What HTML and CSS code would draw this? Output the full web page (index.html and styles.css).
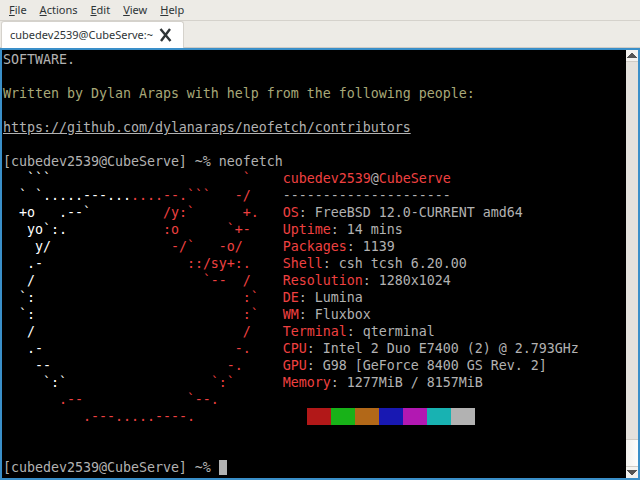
FILE: index.html
```html
<!DOCTYPE html>
<html lang="en">
<head>
<meta charset="utf-8">
<title>qterminal</title>
<link rel="stylesheet" href="styles.css">
</head>
<body>
<div class="app">
  <nav class="menubar">
    <span class="menu"><u>F</u>ile</span>
    <span class="menu"><u>A</u>ctions</span>
    <span class="menu"><u>E</u>dit</span>
    <span class="menu"><u>V</u>iew</span>
    <span class="menu"><u>H</u>elp</span>
  </nav>
  <div class="tabbar">
    <div class="tab">
      <span>cubedev2539@CubeServe:~</span>
      <svg class="close" width="13" height="14" viewBox="0 0 13 14"><path d="M1.5 1 L11.5 13 M11 1 L2 13" stroke="#2e3436" stroke-width="2.4" fill="none"/></svg>
    </div>
  </div>
  <div class="terminal">
    <pre class="screen">SOFTWARE.

<span class="y">Written by Dylan Araps with help from the following people:</span>

<span class="u">https://github.com/dylanaraps/neofetch/contributors</span>

[cubedev2539@CubeServe] ~% neofetch
<span class="w">   ```</span>                        <span class="r">`</span>    <span class="r">cubedev2539</span>@<span class="r">CubeServe</span>
<span class="w">  ` `.....---...</span><span class="r">....--.```   -/</span>    ---------------------
<span class="w">  +o   .--`</span>         <span class="r">/y:`      +.</span>   <span class="r">OS</span>: FreeBSD 12.0-CURRENT amd64
<span class="w">   yo`:.</span>            <span class="r">:o      `+-</span>    <span class="r">Uptime</span>: 14 mins
<span class="w">    y/</span>               <span class="r">-/`   -o/</span>     <span class="r">Packages</span>: 1139
<span class="w">   .-</span>                  <span class="r">::/sy+:.</span>    <span class="r">Shell</span>: csh tcsh 6.20.00
<span class="w">   /</span>                     <span class="r">`--  /</span>    <span class="r">Resolution</span>: 1280x1024
<span class="w">  `:</span>                          <span class="r">:`</span>   <span class="r">DE</span>: Lumina
<span class="w">  `:</span>                          <span class="r">:`</span>   <span class="r">WM</span>: Fluxbox
<span class="w">   /</span>                          <span class="r">/</span>    <span class="r">Terminal</span>: qterminal
<span class="w">   .-</span>                        <span class="r">-.</span>    <span class="r">CPU</span>: Intel 2 Duo E7400 (2) @ 2.793GHz
<span class="w">    --</span>                      <span class="r">-.</span>     <span class="r">GPU</span>: G98 [GeForce 8400 GS Rev. 2]
<span class="w">     `:`</span>                  <span class="r">`:`</span>      <span class="r">Memory</span>: 1277MiB / 8157MiB
       <span class="r">.--             `--.</span>
          <span class="r">.---.....----.</span>              <span class="blk"><i class="c1"></i><i class="c2"></i><i class="c3"></i><i class="c4"></i><i class="c5"></i><i class="c6"></i><i class="c7"></i></span>


[cubedev2539@CubeServe] ~% <span class="cursor"> </span></pre>
    <div class="scrollbar">
      <div class="arrow top"><svg width="10" height="5" viewBox="0 0 10 5"><path d="M4 0 H6 V1 H7 V2 H8 V3 H9 V4 H10 V5 H0 V4 H1 V3 H2 V2 H3 V1 H4 Z" fill="#555"/></svg></div>
      <div class="track"></div>
      <div class="thumb"></div>
      <div class="arrow"><svg width="10" height="5" viewBox="0 0 10 5"><path d="M0 0 H10 V1 H9 V2 H8 V3 H7 V4 H6 V5 H4 V4 H3 V3 H2 V2 H1 V1 H0 Z" fill="#555"/></svg></div>
    </div>
  </div>
</div>
</body>
</html>
```
FILE: styles.css
```css
html, body { margin: 0; padding: 0; }
body { width: 640px; height: 480px; overflow: hidden; background: #edebe6; }
.app { display: flex; flex-direction: column; height: 480px; }
.menubar {
  display: flex; gap: 13px; height: 21px; flex: none; padding: 0 0 2px 9px; align-items: center;
  border-bottom: 1px solid #d5d2cc; background: #edebe6;
  font: 11px "Noto Sans", sans-serif; color: #2e3436; box-sizing: border-box;
}
.tabbar {
  display: flex; align-items: flex-start; flex: none; height: 27px; padding-left: 1px;
  box-sizing: border-box; background: #edebe6; border-bottom: 1px solid #cfccc6;
}
.tab {
  display: flex; align-items: center; gap: 6px; width: 183px; height: 27px; flex: none; box-sizing: border-box;
  padding: 0 0 2px 8px; background: #fff; border: 1px solid #d5d2cc; border-bottom: 0; border-radius: 3px 3px 0 0;
  font: 11px "Noto Sans", sans-serif; color: #2e3436;
}
.close { margin-top: 2px; }
.terminal { flex: 1; display: flex; border: 2px solid #3a8fc9; min-height: 0; background: #000; }
.screen {
  flex: 1; margin: 0; padding: 1px 0 0 1px; overflow: hidden; background: #000; color: #b2b2b2;
  font: 13.33px/17px "DejaVu Sans Mono", monospace; letter-spacing: -0.03px;
}
.r { color: #ef4040; }
.w { color: #fff; }
.y { color: #a8a878; }
.u { text-decoration: underline; }
.blk { display: inline-flex; vertical-align: top; height: 17px; }
.blk i { display: block; width: 24px; height: 17px; }
.c1 { background: #b21818; }
.c2 { background: #18b218; }
.c3 { background: #b26818; }
.c4 { background: #1818b2; }
.c5 { background: #b218b2; }
.c6 { background: #18b2b2; }
.c7 { background: #b2b2b2; }
.cursor { background: #b2b2b2; }
.scrollbar { width: 12px; flex: none; display: flex; flex-direction: column; background: #e4e2dd; }
.arrow { height: 12px; display: flex; align-items: center; justify-content: center; background: #f4f3f0; border-top: 1px solid #cfccc6; box-sizing: border-box; }
.arrow.top { border-top: 0; border-bottom: 1px solid #cfccc6; }
.track { flex: 1; }
.thumb { height: 27px; background: linear-gradient(90deg, #f2f1ee, #fdfdfc); border-top: 1px solid #cfccc6; box-sizing: border-box; }
```
